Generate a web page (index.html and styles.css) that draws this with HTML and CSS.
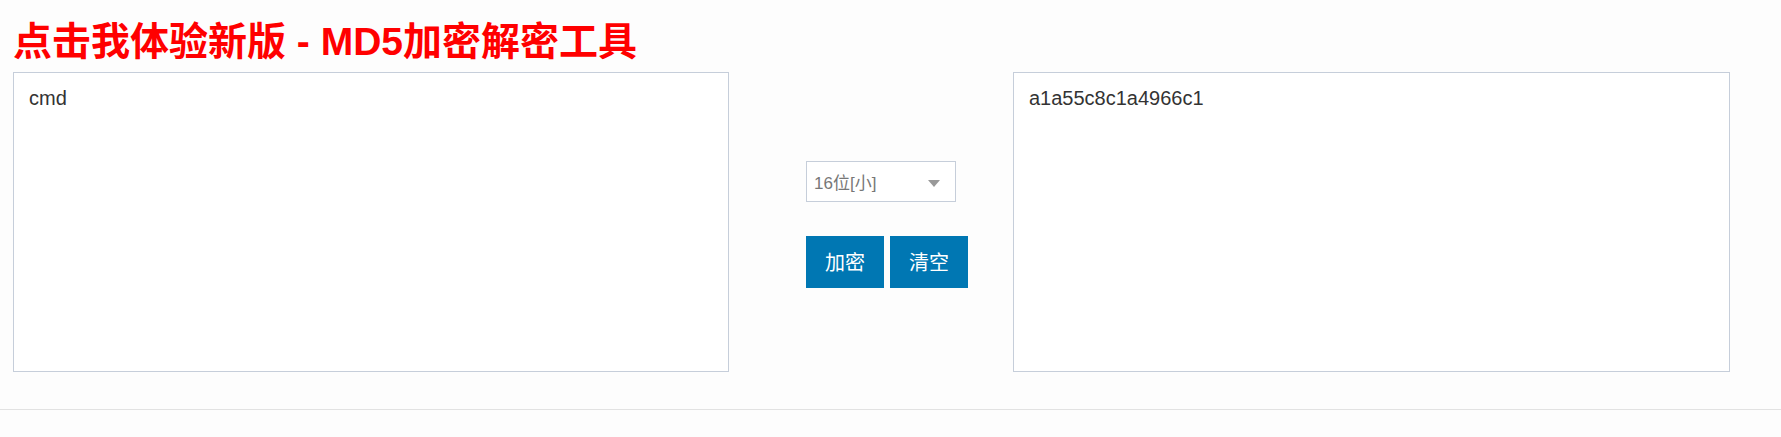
FILE: index.html
```html
<!DOCTYPE html>
<html lang="zh-CN">
<head>
<meta charset="utf-8">
<title>MD5加密解密工具</title>
<link rel="stylesheet" href="styles.css">
</head>
<body>
<div class="page">
  <h1 class="title">点击我体验新版 - MD5加密解密工具</h1>
  <div class="tool">
    <textarea class="box">cmd</textarea>
    <div class="middle">
      <div class="select">
        <span class="select-text">16位[小]</span>
        <span class="arrow"></span>
      </div>
      <div class="buttons">
        <button class="btn">加密</button>
        <button class="btn">清空</button>
      </div>
    </div>
    <textarea class="box box-right">a1a55c8c1a4966c1</textarea>
  </div>
</div>
<div class="divider"></div>
</body>
</html>
```

FILE: styles.css
```css
html, body {
  margin: 0;
  padding: 0;
  background: #fdfdfd;
  font-family: "Liberation Sans", "Noto Sans CJK SC", sans-serif;
}

.page {
  padding-left: 13px;
}

.title {
  margin: 22px 0 11px 0;
  font-size: 39px;
  line-height: 39px;
  font-weight: bold;
  color: #ff0000;
  white-space: nowrap;
}

.tool {
  display: flex;
  align-items: flex-start;
}

.box {
  box-sizing: border-box;
  width: 716px;
  height: 300px;
  margin: 0;
  padding: 14px 15px;
  border: 1px solid #c6ceda;
  background: #fff;
  color: #333;
  font-family: "Liberation Sans", "Noto Sans CJK SC", sans-serif;
  font-size: 20px;
  line-height: 23px;
  resize: none;
  outline: none;
}

.box-right {
  width: 717px;
}

.middle {
  box-sizing: border-box;
  width: 284px;
  padding-left: 77px;
  padding-top: 89px;
  display: flex;
  flex-direction: column;
  gap: 34px;
}

.select {
  box-sizing: border-box;
  width: 150px;
  height: 41px;
  border: 1px solid #c6ceda;
  background: #fff;
  display: flex;
  align-items: center;
  justify-content: space-between;
  padding: 0 15px 0 7px;
  color: #777;
  font-size: 17px;
}

.arrow {
  width: 0;
  height: 0;
  margin-top: 4px;
  border-left: 6px solid transparent;
  border-right: 6px solid transparent;
  border-top: 7px solid #999;
}

.buttons {
  display: flex;
  gap: 6px;
}

.btn {
  box-sizing: border-box;
  width: 78px;
  height: 52px;
  margin: 0;
  padding: 0;
  border: none;
  background: #0077b3;
  color: #fff;
  font-family: "Noto Sans CJK SC", "Liberation Sans", sans-serif;
  font-size: 20px;
  line-height: 52px;
}

.divider {
  margin-top: 37px;
  height: 1px;
  background: #e2e2e2;
}
```
